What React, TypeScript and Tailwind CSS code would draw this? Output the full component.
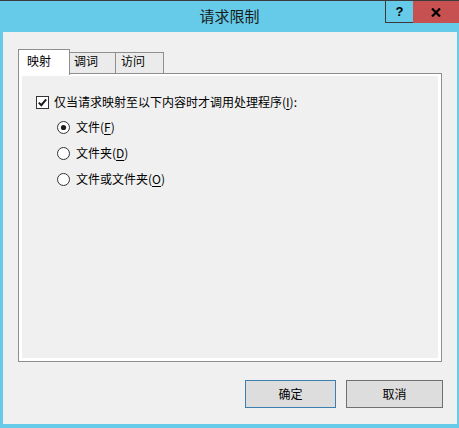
import React from 'react';

const font = "font-['Microsoft_YaHei','Noto_Sans_CJK_SC',sans-serif]";

const CheckBox: React.FC<{ checked?: boolean }> = ({ checked }) => (
  <svg width="13" height="13" viewBox="0 0 13 13" className="shrink-0">
    <rect x="0.5" y="0.5" width="12" height="12" fill="#ffffff" stroke="#333333" />
    {checked && (
      <polyline points="2.8,6.6 5.3,9.2 10.2,3.4" fill="none" stroke="#1c1c1c" strokeWidth="2" />
    )}
  </svg>
);

const Radio: React.FC<{ checked?: boolean }> = ({ checked }) => (
  <svg width="13" height="13" viewBox="0 0 13 13" className="shrink-0">
    <circle cx="6.5" cy="6.5" r="6" fill="#ffffff" stroke="#333333" />
    {checked && <circle cx="6.5" cy="6.5" r="2.6" fill="#1c1c1c" />}
  </svg>
);

const Mnemonic: React.FC<{ k: string }> = ({ k }) => (
  <span>
    (<span className="underline underline-offset-2">{k}</span>)
  </span>
);

const options = [
  { label: '文件', key: 'F', checked: true },
  { label: '文件夹', key: 'D', checked: false },
  { label: '文件或文件夹', key: 'O', checked: false },
];

const App: React.FC = () => {
  return (
    <div className={`w-[459px] h-[428px] bg-[#65cbe9] flex flex-col overflow-hidden ${font}`}>
      {/* title bar */}
      <div className="h-[32px] shrink-0 flex border-t border-[#3c3c3c]">
        <div className="w-[74px]" />
        <div className="flex-1 flex items-center justify-center text-[15px] text-[#1b1b1b] pb-[1px]">
          请求限制
        </div>
        <div className="flex h-[22px] self-start">
          <div className="w-[28px] border-l border-b border-[#3a3a3a] flex items-center justify-center font-['Liberation_Sans',sans-serif] font-bold text-[13px] text-black">
            ?
          </div>
          <div className="w-[46px] bg-[#c75050] flex items-center justify-center">
            <svg width="10" height="9" viewBox="0 0 10 9">
              <path d="M1 0.5 L9 8.5 M9 0.5 L1 8.5" stroke="#000000" strokeWidth="2.2" />
            </svg>
          </div>
        </div>
      </div>

      {/* client area */}
      <div className="flex-1 ml-[3px] mr-[2px] mb-[4px] bg-[#f0f0f0] px-[15px] pt-[17px] flex flex-col">
        <div className="h-[24px] flex items-end relative z-10 text-[12px] text-black">
          <div className="h-[26px] mb-[-2px] w-[52px] bg-white border-l border-t border-r border-[#8e8e8e] flex items-center pl-[8px] pb-[4px]">
            映射
          </div>
          <div className="h-[21px] w-[46px] bg-[#ebebeb] border-t border-r border-[#8e8e8e] flex items-center pl-[4px] pb-[4px]">
            调词
          </div>
          <div className="h-[21px] w-[48px] bg-[#ebebeb] border-t border-r border-[#8e8e8e] flex items-center pl-[5px] pb-[4px]">
            访问
          </div>
        </div>

        <div className="h-[289px] border border-[#8e8e8e] shrink-0">
          <div className="h-full border-t-2 border-x-[3px] border-b-[3px] border-white pt-[14px] text-[12px] text-black">
            <div className="h-[24px] flex items-center gap-[5px] pl-[14px]">
              <CheckBox checked />
              <span>
                仅当请求映射至以下内容时才调用处理程序<Mnemonic k="I" />:
              </span>
            </div>
            {options.map(o => (
              <div key={o.key} className="h-[26px] flex items-center gap-[6px] pl-[35px]">
                <Radio checked={o.checked} />
                <span>
                  {o.label}
                  <Mnemonic k={o.key} />
                </span>
              </div>
            ))}
          </div>
        </div>

        <div className="flex justify-end gap-[10px] pr-[-1px] mr-[-1px] pt-[18px] text-[12px] text-black">
          <button className="w-[91px] h-[28px] bg-[#dddddd] border border-[#3c7fb1] flex items-center justify-center">
            确定
          </button>
          <button className="w-[97px] h-[28px] bg-[#dddddd] border border-[#707070] flex items-center justify-center">
            取消
          </button>
        </div>
      </div>
    </div>
  );
};

export default App;
